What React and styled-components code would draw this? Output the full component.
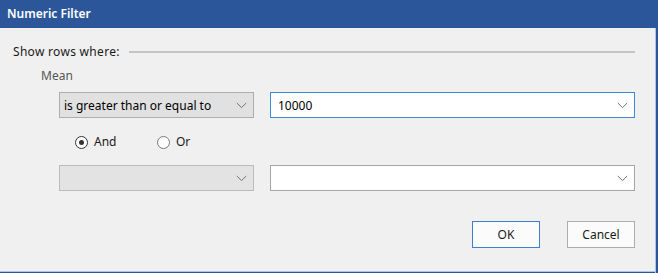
import React from "react";
import styled, { createGlobalStyle } from "styled-components";

const Global = createGlobalStyle`
  html, body { margin: 0; padding: 0; background: #f0f0f0; }
  * { box-sizing: border-box; }
`;

const Window = styled.div`
  width: 658px;
  height: 273px;
  background: #f0f0f0;
  font-family: "Noto Sans", "Open Sans", sans-serif;
  font-size: 12px;
  color: #000;
  display: flex;
  flex-direction: column;
  box-shadow: inset -2px 0 #2b579a, inset -3px 0 #a9c5ea, inset 0 -1px #2b579a,
    inset 0 -2px #a9c5ea;
`;

const TitleBar = styled.div`
  height: 28px;
  flex: none;
  background: #2b579a;
  color: #fff;
  font-weight: 600;
  font-size: 12px;
  line-height: 28px;
  padding-left: 7px;
`;

const Body = styled.div`
  flex: 1;
  padding: 16px 23px 0 13px;
  display: flex;
  flex-direction: column;
`;

const GroupHeader = styled.div`
  display: flex;
  align-items: center;
  gap: 9px;
  height: 16px;
  line-height: 16px;
  color: #1a1a1a;
  letter-spacing: 0.3px;
`;

const Rule = styled.div`
  flex: 1;
  height: 2px;
  background: #c4c4c4;
`;

const FieldLabel = styled.div`
  margin: 8px 0 0 28px;
  height: 16px;
  line-height: 16px;
  color: #555;
`;

const Row = styled.div`
  display: flex;
  gap: 16px;
  margin-left: 46px;
  margin-top: ${(p) => p.$top}px;
  height: 26px;
`;

const Select = styled.div`
  width: 195px;
  height: 26px;
  display: flex;
  align-items: center;
  justify-content: space-between;
  padding: 0 6px 0 4px;
  background: ${(p) => (p.$disabled ? "#e3e3e3" : "#e1e1e1")};
  border: 1px solid ${(p) => (p.$disabled ? "#bcbcbc" : "#adadad")};
  color: #000;
`;

const Combo = styled.div`
  flex: 1;
  height: 26px;
  display: flex;
  align-items: center;
  justify-content: space-between;
  padding: 0 6px 0 7px;
  background: #fff;
  border: 1px solid ${(p) => (p.$focused ? "#3c8ad8" : "#a5a5a5")};
`;

const Chevron = () => (
  <svg width="11" height="7" viewBox="0 0 11 7">
    <path d="M0.8 1 L5.5 5.6 L10.2 1" fill="none" stroke="#707070" strokeWidth="1" />
  </svg>
);

const RadioRow = styled.div`
  display: flex;
  align-items: center;
  margin: 16px 0 0 62px;
  height: 16px;
`;

const RadioItem = styled.label`
  display: flex;
  align-items: center;
  gap: 6px;
  width: ${(p) => p.$w}px;
  line-height: 16px;
  color: #1a1a1a;
`;

const RadioCircle = styled.span`
  width: 13px;
  height: 13px;
  border-radius: 50%;
  border: 1px solid ${(p) => (p.$checked ? "#333" : "#7a7a7a")};
  background: #fff;
  display: flex;
  align-items: center;
  justify-content: center;
  &::after {
    content: "";
    width: 5px;
    height: 5px;
    border-radius: 50%;
    background: ${(p) => (p.$checked ? "#333" : "transparent")};
  }
`;

const Buttons = styled.div`
  display: flex;
  justify-content: flex-end;
  gap: 27px;
  margin-top: 30px;
`;

const Button = styled.button`
  width: 68px;
  height: 27px;
  font-family: inherit;
  font-size: 12px;
  color: #1a1a1a;
  background: #fbfbfb;
  border: 1px solid ${(p) => (p.$primary ? "#3c7fcf" : "#adadad")};
  padding: 0;
`;

export default function App() {
  return (
    <>
      <Global />
      <Window>
        <TitleBar>Numeric Filter</TitleBar>
        <Body>
          <GroupHeader>
            Show rows where:
            <Rule />
          </GroupHeader>
          <FieldLabel>Mean</FieldLabel>
          <Row $top={8}>
            <Select>
              <span>is greater than or equal to</span>
              <Chevron />
            </Select>
            <Combo $focused>
              <span>10000</span>
              <Chevron />
            </Combo>
          </Row>
          <RadioRow>
            <RadioItem $w={82}>
              <RadioCircle $checked />
              And
            </RadioItem>
            <RadioItem $w={40}>
              <RadioCircle />
              Or
            </RadioItem>
          </RadioRow>
          <Row $top={15}>
            <Select $disabled>
              <span />
              <Chevron />
            </Select>
            <Combo>
              <span />
              <Chevron />
            </Combo>
          </Row>
          <Buttons>
            <Button $primary>OK</Button>
            <Button>Cancel</Button>
          </Buttons>
        </Body>
      </Window>
    </>
  );
}
